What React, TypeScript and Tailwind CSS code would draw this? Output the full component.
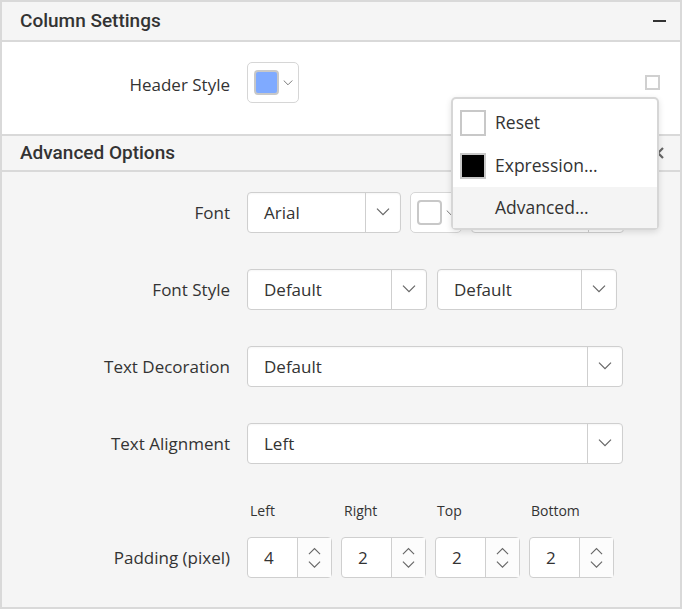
import { useState } from 'react'

const Chevron = ({ up = false, size = 14 }: { up?: boolean; size?: number }) => (
  <svg width={size} height={size * 0.6} viewBox="0 0 14 8" fill="none" stroke="#666" strokeWidth="1.2">
    {up ? <path d="M1 7.5 7 1.5l6 6" /> : <path d="M1 0.5l6 6 6-6" />}
  </svg>
)

function Select({ value, width, arrow = 35 }: { value: string; width: number; arrow?: number }) {
  return (
    <div
      className="flex h-[41px] rounded-[4px] border border-[#cfcfcf] bg-white shadow-[inset_0_1px_2px_rgba(0,0,0,0.04)]"
      style={{ width }}
    >
      <div className="flex flex-1 items-center pl-4 text-[17px] text-[#333]">{value}</div>
      <div className="flex items-center justify-center border-l border-[#cfcfcf]" style={{ width: arrow }}>
        <Chevron />
      </div>
    </div>
  )
}

function Spinner({ value }: { value: string }) {
  return (
    <div className="flex h-[41px] w-[85px] rounded-[4px] border border-[#cfcfcf] bg-white">
      <div className="flex w-[49px] items-center pl-[16px] text-[17px] text-[#333]">{value}</div>
      <div className="flex flex-1 flex-col items-center justify-center gap-[6px] border-l border-[#cfcfcf] bg-[#fcfcfc]">
        <Chevron up size={13} />
        <Chevron size={13} />
      </div>
    </div>
  )
}

function Row({ label, gap = 10, children }: { label: string; gap?: number; children: React.ReactNode }) {
  return (
    <div className="flex h-[41px] items-center">
      <div className="w-[228px] text-right text-[17px] text-[#333]">{label}</div>
      <div className="ml-[17px] flex items-center" style={{ gap }}>{children}</div>
    </div>
  )
}

export default function App() {
  const [hover] = useState(2)
  const items = ['Reset', 'Expression...', 'Advanced...']
  return (
    <div className="relative h-[611px] w-[684px] bg-white" style={{ fontFamily: '"Open Sans", sans-serif' }}>
      <div className="flex h-[609px] w-[682px] flex-col border-2 border-[#d9d9d9]">
        <div
          className="flex h-[40px] shrink-0 items-center justify-between border-b-2 border-[#d9d9d9] bg-[#f5f5f5] pl-[18px] pr-[14px] text-[19px] font-medium text-[#333]"
          style={{ fontFamily: 'Roboto, sans-serif' }}
        >
          <span>Column Settings</span>
          <span className="block h-[2px] w-[13px] bg-[#333]" />
        </div>
        <div className="flex h-[94px] shrink-0 items-start border-b-2 border-[#d9d9d9] pr-[20px] pt-[20px]">
          <div className="mt-[10px] w-[228px] text-right text-[17px] text-[#333]">Header Style</div>
          <div className="ml-[17px] flex h-[41px] w-[52px] items-center rounded-[5px] border border-[#d6d6d6] bg-white pl-[6px]">
            <span className="block h-[25px] w-[25px] rounded-[4px] border-2 border-[#c8c8c8] bg-[#7faaff]" />
            <span className="ml-[4px]"><Chevron size={10} /></span>
          </div>
          <div className="flex-1" />
          <span className="mt-[13px] block h-[15px] w-[15px] border-2 border-[#d0d0d0]" />
        </div>
        <div
          className="flex h-[36px] shrink-0 items-center justify-between border-b-2 border-[#d9d9d9] bg-[#f5f5f5] pl-[18px] pr-[16px] text-[19px] font-medium text-[#333]"
          style={{ fontFamily: 'Roboto, sans-serif' }}
        >
          <span>Advanced Options</span>
          <svg width="12" height="12" viewBox="0 0 12 12" stroke="#666" strokeWidth="2.2">
            <path d="M1 1l10 10M11 1 1 11" />
          </svg>
        </div>
        <div className="flex flex-1 flex-col bg-[#f5f5f5] pt-[20px]">
          <div className="flex flex-col gap-[36px]">
            <Row label="Font" gap={9}>
              <Select value="Arial" width={154} arrow={35} />
              <div className="flex h-[41px] w-[52px] items-center rounded-[5px] border border-[#d6d6d6] bg-white pl-[6px]">
                <span className="block h-[25px] w-[25px] rounded-[4px] border-2 border-[#c8c8c8] bg-white" />
                <span className="ml-[4px]"><Chevron size={10} /></span>
              </div>
              <Select value="" width={153} />
            </Row>
            <Row label="Font Style">
              <Select value="Default" width={180} />
              <Select value="Default" width={180} />
            </Row>
            <Row label="Text Decoration">
              <Select value="Default" width={376} />
            </Row>
            <Row label="Text Alignment">
              <Select value="Left" width={376} />
            </Row>
          </div>
          <div className="mt-[36px] flex pl-[248px] text-[14px] text-[#333]">
            <span className="w-[94px]">Left</span>
            <span className="w-[93px]">Right</span>
            <span className="w-[94px]">Top</span>
            <span>Bottom</span>
          </div>
          <div className="mt-[16px]">
            <Row label="Padding (pixel)" gap={9}>
              <Spinner value="4" />
              <Spinner value="2" />
              <Spinner value="2" />
              <Spinner value="2" />
            </Row>
          </div>
        </div>
      </div>
      <div className="absolute left-[451px] top-[97px] w-[208px] rounded-[5px] border-2 border-[#d6d6d6] bg-white pt-[2px] shadow-[0_2px_6px_rgba(0,0,0,0.12)]">
        {items.map((it, i) => (
          <div
            key={it}
            className={`flex items-center pl-[7px] text-[17.5px] text-[#333] ${i === 2 ? 'h-[41px]' : 'h-[43px]'} ${i === hover ? 'bg-[#f4f4f4]' : ''}`}
          >
            {i < 2 ? (
              <span className={`block h-[26px] w-[26px] border-2 border-[#c8c8c8] ${i === 1 ? 'bg-black' : 'bg-white'}`} />
            ) : (
              <span className="block w-[26px]" />
            )}
            <span className="ml-[9px]">{it}</span>
          </div>
        ))}
      </div>
    </div>
  )
}
